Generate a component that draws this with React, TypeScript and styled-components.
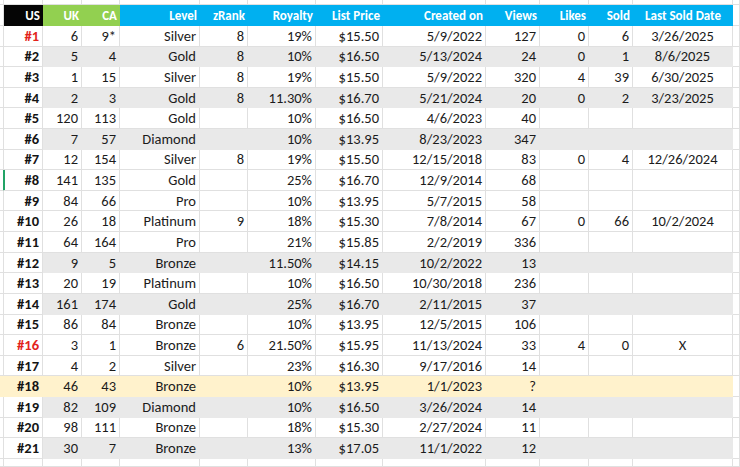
import React from "react";
import styled, { createGlobalStyle, css } from "styled-components";

const GlobalStyle = createGlobalStyle`
  html, body { margin: 0; padding: 0; background: #ffffff; }
  body { font-family: Carlito, Calibri, Lato, "Liberation Sans", sans-serif; }
`;

const COLS = "4px 39px 39px 38px 80px 48px 68px 67px 103px 54px 49px 44px 100px 7px";
const GRID = "#e0e0e0";

type Fill = "none" | "gray" | "yellow";

const Sheet = styled.div`
  width: 740px;
  height: 467px;
  overflow: hidden;
  display: flex;
  flex-direction: column;
  background: #ffffff;
`;

const Row = styled.div<{ $h: number }>`
  display: grid;
  grid-template-columns: ${COLS};
  height: ${(p) => p.$h}px;
  flex: none;
`;

const Filler = styled(Row)`
  flex: 1 1 auto;
`;

const Cell = styled.div<{ $fill?: Fill; $align?: "right" | "center"; $edge?: boolean }>`
  box-sizing: border-box;
  display: flex;
  align-items: center;
  justify-content: ${(p) => (p.$align === "center" ? "center" : "flex-end")};
  padding-right: ${(p) => (p.$align === "center" ? "0" : "3px")};
  font-size: 14.5px;
  color: #1b1b1b;
  white-space: nowrap;
  overflow: hidden;
  border-right: 1px solid ${GRID};
  border-bottom: 1px solid ${GRID};
  ${(p) =>
    p.$fill === "gray" &&
    css`
      background: #e9e9e9;
      border-right-color: #e9e9e9;
      border-bottom-color: #e9e9e9;
    `}
  ${(p) =>
    p.$fill === "yellow" &&
    css`
      background: #fff2cc;
      border-right-color: #fff2cc;
      border-bottom-color: #fff2cc;
    `}
  ${(p) =>
    p.$edge &&
    css`
      border-right: 2px solid #21a366;
    `}
`;

const RankCell = styled(Cell)<{ $red?: boolean }>`
  font-weight: 700;
  color: ${(p) => (p.$red ? "#e3231c" : "#141414")};
`;

const HeadCell = styled.div<{ $bg: string; $align?: "right" | "center" }>`
  box-sizing: border-box;
  display: flex;
  align-items: center;
  justify-content: ${(p) => (p.$align === "center" ? "center" : "flex-end")};
  padding-right: ${(p) => (p.$align === "center" ? "0" : "3px")};
  background: ${(p) => p.$bg};
  color: #ffffff;
  font-weight: 700;
  font-size: 13px;
  white-space: nowrap;
`;

const MarginCell = styled.div`
  box-sizing: border-box;
  border-right: 1px solid ${GRID};
  border-bottom: 1px solid ${GRID};
`;

const BLACK = "#050505";
const GREEN = "#92d050";
const BLUE = "#00b0f0";

const headers: { label: string; bg: string; align?: "center" }[] = [
  { label: "US", bg: BLACK },
  { label: "UK", bg: GREEN },
  { label: "CA", bg: GREEN },
  { label: "Level", bg: BLUE },
  { label: "zRank", bg: BLUE },
  { label: "Royalty", bg: BLUE },
  { label: "List Price", bg: BLUE },
  { label: "Created on", bg: BLUE },
  { label: "Views", bg: BLUE },
  { label: "Likes", bg: BLUE },
  { label: "Sold", bg: BLUE },
  { label: "Last Sold Date", bg: BLUE, align: "center" },
];

type Rec = { red?: boolean; fill?: Fill; v: string[] };

const rows: Rec[] = [
  { red: true, v: ["6", "9*", "Silver", "8", "19%", "$15.50", "5/9/2022", "127", "0", "6", "3/26/2025"] },
  { fill: "gray", v: ["5", "4", "Gold", "8", "10%", "$16.50", "5/13/2024", "24", "0", "1", "8/6/2025"] },
  { v: ["1", "15", "Silver", "8", "19%", "$15.50", "5/9/2022", "320", "4", "39", "6/30/2025"] },
  { fill: "gray", v: ["2", "3", "Gold", "8", "11.30%", "$16.70", "5/21/2024", "20", "0", "2", "3/23/2025"] },
  { v: ["120", "113", "Gold", "", "10%", "$16.50", "4/6/2023", "40", "", "", ""] },
  { fill: "gray", v: ["7", "57", "Diamond", "", "10%", "$13.95", "8/23/2023", "347", "", "", ""] },
  { v: ["12", "154", "Silver", "8", "19%", "$15.50", "12/15/2018", "83", "0", "4", "12/26/2024"] },
  { v: ["141", "135", "Gold", "", "25%", "$16.70", "12/9/2014", "68", "", "", ""] },
  { v: ["84", "66", "Pro", "", "10%", "$13.95", "5/7/2015", "58", "", "", ""] },
  { v: ["26", "18", "Platinum", "9", "18%", "$15.30", "7/8/2014", "67", "0", "66", "10/2/2024"] },
  { v: ["64", "164", "Pro", "", "21%", "$15.85", "2/2/2019", "336", "", "", ""] },
  { fill: "gray", v: ["9", "5", "Bronze", "", "11.50%", "$14.15", "10/2/2022", "13", "", "", ""] },
  { v: ["20", "19", "Platinum", "", "10%", "$16.50", "10/30/2018", "236", "", "", ""] },
  { fill: "gray", v: ["161", "174", "Gold", "", "25%", "$16.70", "2/11/2015", "37", "", "", ""] },
  { v: ["86", "84", "Bronze", "", "10%", "$13.95", "12/5/2015", "106", "", "", ""] },
  { red: true, v: ["3", "1", "Bronze", "6", "21.50%", "$15.95", "11/13/2024", "33", "4", "0", "X"] },
  { v: ["4", "2", "Silver", "", "23%", "$16.30", "9/17/2016", "14", "", "", ""] },
  { fill: "yellow", v: ["46", "43", "Bronze", "", "10%", "$13.95", "1/1/2023", "?", "", "", ""] },
  { fill: "gray", v: ["82", "109", "Diamond", "", "10%", "$16.50", "3/26/2024", "14", "", "", ""] },
  { v: ["98", "111", "Bronze", "", "18%", "$15.30", "2/27/2024", "11", "", "", ""] },
  { fill: "gray", v: ["30", "7", "Bronze", "", "13%", "$17.05", "11/1/2022", "12", "", "", ""] },
];

const ROW_H = 20.62;

const EmptyRow: React.FC<{ h?: number; grow?: boolean }> = ({ h = 5, grow }) => {
  const cells = Array.from({ length: 14 }, (_, i) => <MarginCell key={i} />);
  return grow ? <Filler $h={h}>{cells}</Filler> : <Row $h={h}>{cells}</Row>;
};

export default function App() {
  return (
    <>
      <GlobalStyle />
      <Sheet>
        <EmptyRow h={5} />
        <Row $h={21}>
          <MarginCell />
          {headers.map((h) => (
            <HeadCell key={h.label} $bg={h.bg} $align={h.align}>
              {h.label}
            </HeadCell>
          ))}
          <MarginCell />
        </Row>
        {rows.map((r, i) => {
          const n = i + 1;
          const fill: Fill = r.fill ?? "none";
          return (
            <Row key={n} $h={ROW_H}>
              <Cell $fill={fill === "yellow" ? "yellow" : "none"} $edge={n === 8} />
              <RankCell $red={r.red} $fill={fill === "yellow" ? "yellow" : "none"}>
                #{n}
              </RankCell>
              {r.v.map((val, j) => (
                <Cell key={j} $fill={fill} $align={j === 10 ? "center" : "right"}>
                  {val}
                </Cell>
              ))}
              <MarginCell />
            </Row>
          );
        })}
        <EmptyRow h={8} grow />
      </Sheet>
    </>
  );
}
